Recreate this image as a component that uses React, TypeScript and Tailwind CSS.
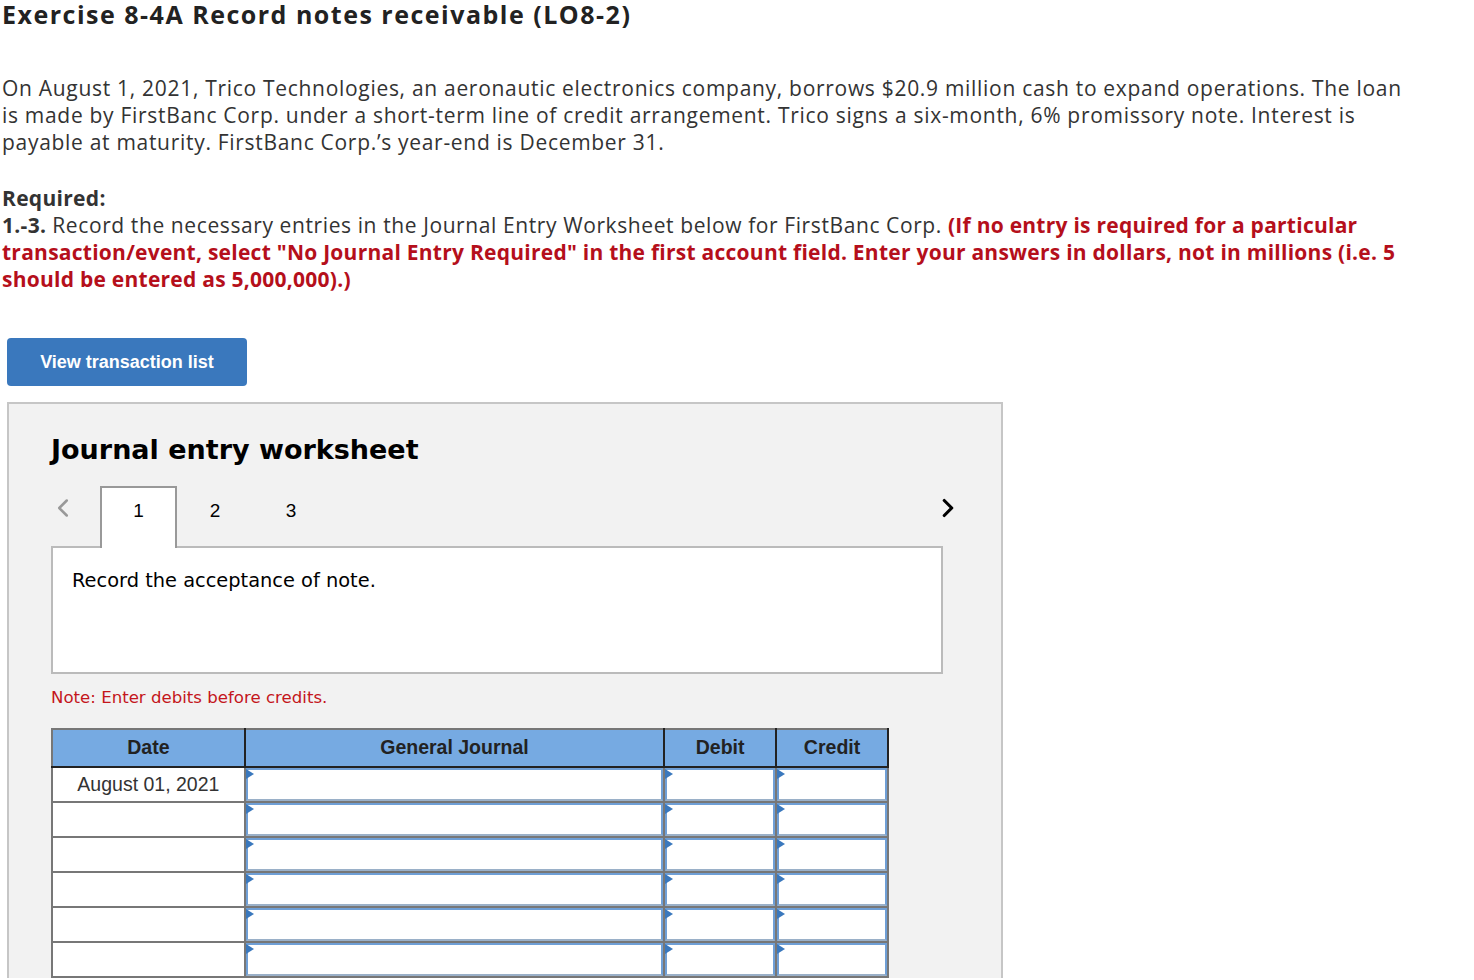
import { ChevronLeft, ChevronRight } from "lucide-react";

const rows = ["August 01, 2021", "", "", "", "", ""];

function InputCell() {
  return (
    <td className="border-2 border-[#777] p-0 h-[35px]">
      <div className="relative h-full w-full border-2 border-[#6f9fd6] border-b-[#9ab0c8] bg-white">
        <div className="absolute -left-[2px] -top-[1px] h-0 w-0 border-y-[5px] border-l-[8px] border-y-transparent border-l-[#3a78bd]" />
      </div>
    </td>
  );
}

export default function App() {
  return (
    <div className="min-h-screen bg-white text-[#222]" style={{ fontFamily: "'Open Sans', Lato, sans-serif" }}>
      <div className="px-[2px]">
        <h1 className="whitespace-nowrap text-[25px] font-bold leading-[28px] tracking-[1.5px] text-[#222]">
          Exercise 8-4A Record notes receivable (LO8-2)
        </h1>
        <p className="mt-[47px] whitespace-nowrap text-[21px] leading-[27px] tracking-[0.7px] text-[#333]">
          On August 1, 2021, Trico Technologies, an aeronautic electronics company, borrows $20.9 million cash to expand operations. The loan
          <br />
          is made by FirstBanc Corp. under a short-term line of credit arrangement. Trico signs a six-month, 6% promissory note. Interest is
          <br />
          payable at maturity. FirstBanc Corp.’s year-end is December 31.
        </p>
        <div className="mt-[29px] whitespace-nowrap text-[21px] leading-[27px] text-[#333]">
          <div className="font-bold tracking-[0.3px]">Required:</div>
          <div className="tracking-[0.6px]">
            <span className="font-bold tracking-[0.3px]">1.-3.</span> Record the necessary entries in the Journal Entry Worksheet below for FirstBanc Corp.{" "}
            <span className="font-bold tracking-[0.25px] text-[#b50f1b]">(If no entry is required for a particular</span>
          </div>
          <div className="font-bold tracking-[0.25px] text-[#b50f1b]">
            transaction/event, select "No Journal Entry Required" in the first account field. Enter your answers in dollars, not in millions (i.e. 5
          </div>
          <div className="font-bold tracking-[0.25px] text-[#b50f1b]">should be entered as 5,000,000).)</div>
        </div>
      </div>

      <div className="ml-[7px] mt-[45px]">
        <button
          className="h-[48px] w-[240px] rounded-[4px] bg-[#3a78bd] text-[18px] font-bold text-white"
          style={{ fontFamily: "'Liberation Sans', Arial, sans-serif" }}
        >
          View transaction list
        </button>
      </div>

      <div className="ml-[7px] mt-[16px] w-[996px] border-2 border-b-0 border-[#c6c6c6] bg-[#f2f2f2] pl-[42px] pr-[58px] pt-[26px]">
        <h2
          className="text-[27px] font-bold leading-[40px] text-black"
          style={{ fontFamily: "'DejaVu Sans', Verdana, sans-serif" }}
        >
          Journal entry worksheet
        </h2>

        <div className="mt-[16px] flex h-[62px] items-start" style={{ fontFamily: "'Liberation Sans', Arial, sans-serif" }}>
          <ChevronLeft className="mt-[7px] h-[30px] w-[30px] text-[#999]" strokeWidth={2} style={{ marginLeft: -3 }} />
          <div className="relative z-10 ml-[22px] flex h-[62px] w-[77px] justify-center border-2 border-b-0 border-[#999] bg-white pt-[9px] text-[19px] text-black">
            1
          </div>
          <div className="flex w-[76px] justify-center pt-[11px] text-[19px] text-black">2</div>
          <div className="flex w-[76px] justify-center pt-[11px] text-[19px] text-black">3</div>
          <div className="flex-1" />
          <ChevronRight className="mt-[7px] h-[30px] w-[30px] text-black" strokeWidth={2.5} style={{ marginRight: -20 }} />
        </div>

        <div
          className="-mt-[2px] h-[128px] border-2 border-[#bbb] bg-white px-[19px] pt-[18px] text-[19.4px] text-black"
          style={{ fontFamily: "'DejaVu Sans', Verdana, sans-serif" }}
        >
          Record the acceptance of note.
        </div>

        <p
          className="mt-[12px] text-[16.6px] text-[#c4161c]"
          style={{ fontFamily: "'DejaVu Sans', Verdana, sans-serif" }}
        >
          Note: Enter debits before credits.
        </p>

        <table
          className="mt-[17px] w-[838px] border-collapse text-[19.5px]"
          style={{ fontFamily: "'Liberation Sans', Arial, sans-serif" }}
        >
          <thead>
            <tr className="h-[38px] bg-[#76aae2] font-bold text-[#222]">
              <th className="w-[193px] border-2 border-[#777] border-r-[#222] border-b-[#222]">Date</th>
              <th className="w-[420px] border-2 border-[#777] border-r-[#222] border-b-[#222]">General Journal</th>
              <th className="w-[112px] border-2 border-[#777] border-r-[#222] border-b-[#222]">Debit</th>
              <th className="w-[112px] border-2 border-[#777] border-r-[#222] border-b-[#222]">Credit</th>
            </tr>
          </thead>
          <tbody>
            {rows.map((d, i) => (
              <tr key={i} className="h-[35px]">
                <td className="border-2 border-[#777] bg-white text-center text-[#333]">{d}</td>
                <InputCell />
                <InputCell />
                <InputCell />
              </tr>
            ))}
          </tbody>
        </table>
      </div>
    </div>
  );
}
